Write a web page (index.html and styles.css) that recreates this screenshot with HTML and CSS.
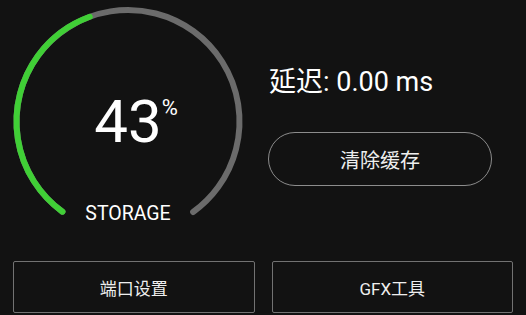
FILE: index.html
```html
<!DOCTYPE html>
<html lang="zh-CN">
  <head>
    <meta charset="UTF-8" />
    <meta name="viewport" content="width=device-width, initial-scale=1.0" />
    <title>Storage</title>
    <link rel="stylesheet" href="styles.css">
  </head>
  <body>
    <main class="top">
      <section class="gauge">
        <svg class="ring" viewBox="0 0 236 236" width="236" height="236">
          <circle class="track" cx="118" cy="117.5" r="111.5"
            stroke-dasharray="560.46 700.58" transform="rotate(126 118 117.5)" />
          <circle class="fill" cx="118" cy="117.5" r="111.5"
            stroke-dasharray="241.0 700.58" transform="rotate(126 118 117.5)" />
        </svg>
        <div class="value">
          <span class="num">43<span class="pct">%</span></span>
        </div>
        <div class="label">STORAGE</div>
      </section>

      <section class="side">
        <p class="latency">延迟: 0.00 ms</p>
        <button class="pill">清除缓存</button>
      </section>
    </main>

    <footer class="actions">
      <button class="box">端口设置</button>
      <button class="box">GFX工具</button>
    </footer>
  </body>
</html>
```

FILE: styles.css
```css
html,
body {
  margin: 0;
  padding: 0;
}

body {
  width: 526px;
  height: 315px;
  overflow: hidden;
  background: #121212;
  color: #fff;
  font-family: Roboto, "Noto Sans CJK SC", sans-serif;
}

.top {
  display: flex;
  padding: 4px 0 0 10px;
}

.gauge {
  position: relative;
  width: 236px;
  height: 236px;
}

.ring {
  display: block;
}

.ring circle {
  fill: none;
  stroke-width: 6;
  stroke-linecap: round;
}

.track {
  stroke: #6b6b6b;
}

.fill {
  stroke: #40cf36;
}

.value {
  position: absolute;
  top: 0;
  left: 0;
  right: 0;
  bottom: 0;
  display: flex;
  align-items: center;
  justify-content: center;
}

.num {
  position: relative;
  font-size: 60px;
  line-height: 60px;
}

.pct {
  position: absolute;
  left: 100%;
  top: 5px;
  font-size: 22px;
  line-height: 22px;
}

.label {
  position: absolute;
  top: 200px;
  left: 0;
  right: 0;
  text-align: center;
  font-size: 19.5px;
  line-height: 19.5px;
}

.side {
  display: flex;
  flex-direction: column;
  margin-left: 22px;
  padding-top: 62px;
}

.latency {
  margin: 0 0 0 1px;
  font-size: 27px;
  line-height: 32px;
}

.pill {
  margin-top: 34px;
  width: 224px;
  height: 54px;
  border: 1px solid #8c8c8c;
  border-radius: 27px;
  background: transparent;
  color: #eee;
  font-family: inherit;
  font-size: 20px;
}

.actions {
  display: grid;
  grid-template-columns: 1fr 1fr;
  gap: 17px;
  margin-top: 21px;
  padding: 0 13px;
}

.box {
  height: 52px;
  border: 1px solid #727272;
  border-radius: 2px;
  background: transparent;
  color: #eee;
  font-family: inherit;
  font-size: 17px;
}
```
